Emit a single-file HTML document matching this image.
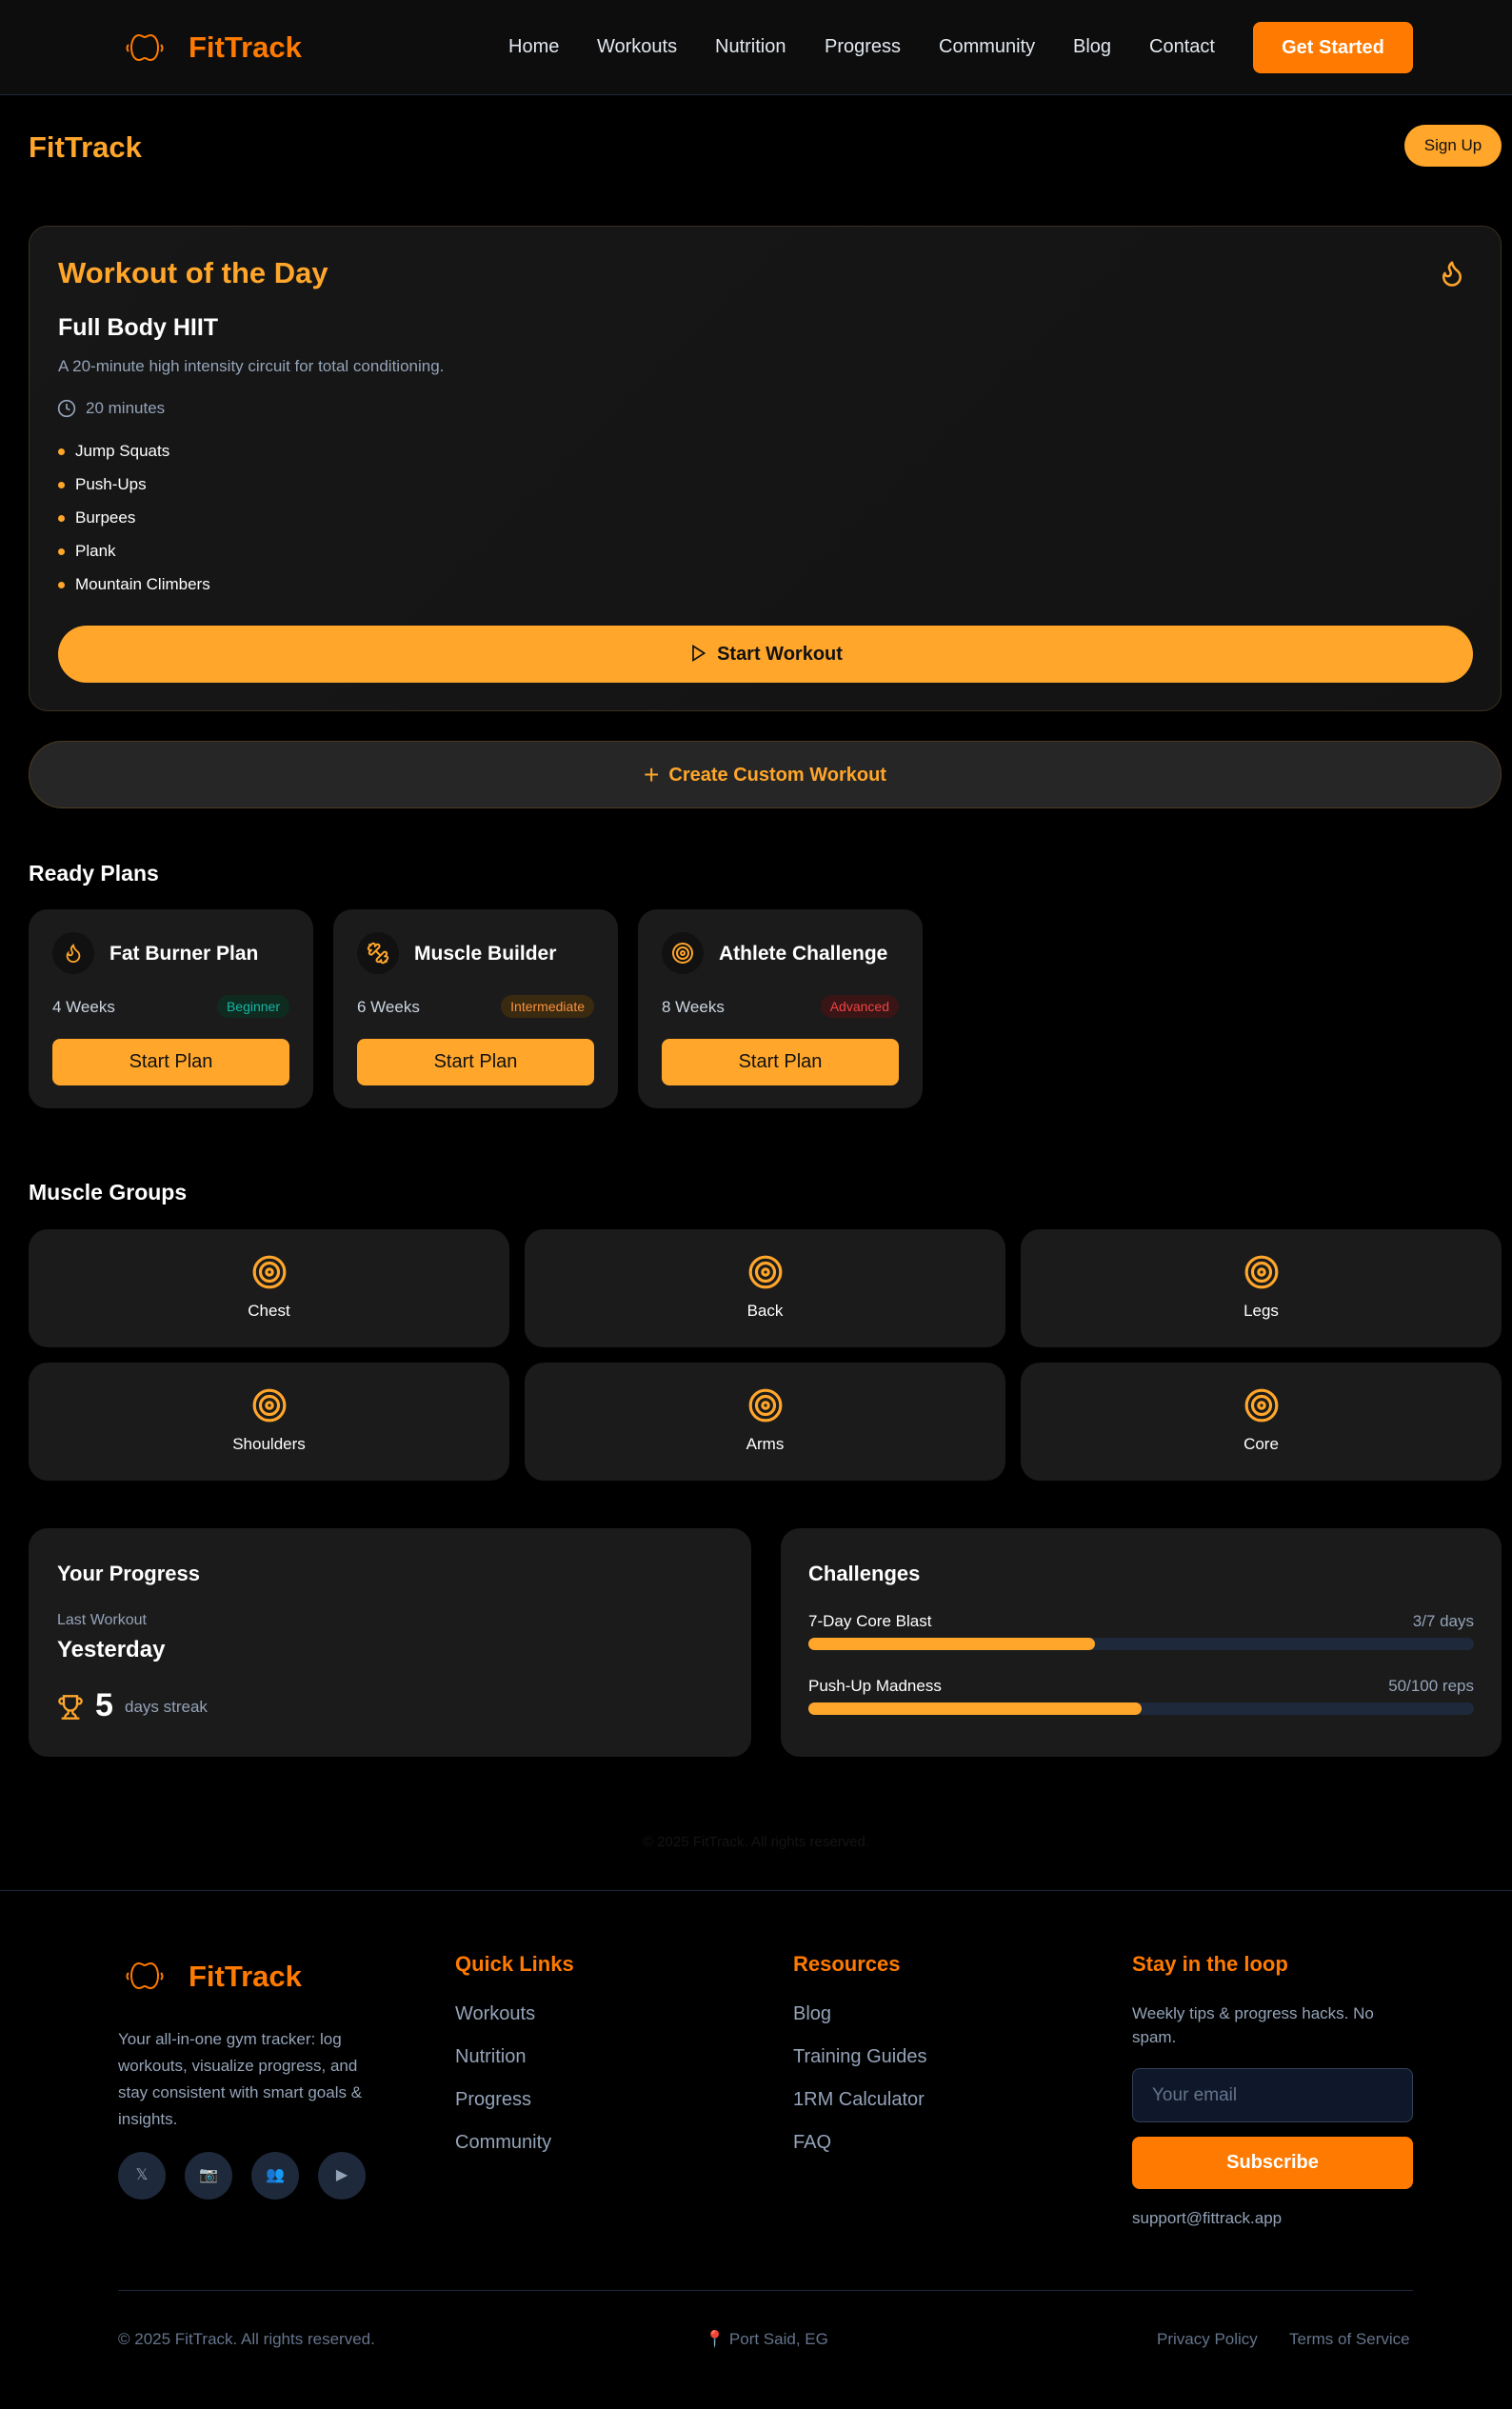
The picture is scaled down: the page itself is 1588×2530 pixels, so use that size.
<!DOCTYPE html>
<html><head><meta charset="utf-8"><style>
*{box-sizing:border-box;margin:0;padding:0}
body{width:1588px;height:2530px;background:#000;font-family:"Liberation Sans",sans-serif;color:#fff;position:relative;overflow:hidden}
.a{position:absolute}
.or{color:#ff7a00}.lo{color:#ffa62b}
nav{position:absolute;left:0;top:0;width:1588px;height:100px;background:#0d0d0d;border-bottom:1px solid #1e293b}
.nl{position:absolute;top:38px;font-size:20px;color:#e2e8f0}
.card{position:absolute;background:#1b1b1b;border-radius:20px}
.li{position:absolute;left:61px;font-size:17px;color:#fff}
.li:before{content:"";position:absolute;left:0;top:7px;width:7px;height:7px;border-radius:50%;background:#ffa62b}
.li span{margin-left:18px}
.pc{position:absolute;top:955px;width:299px;height:209px;background:#1b1b1b;border-radius:20px}
.pc .ic{position:absolute;left:25px;top:24px;width:44px;height:44px;border-radius:50%;background:#111;display:flex;align-items:center;justify-content:center}
.pc .t{position:absolute;left:85px;top:35px;font-size:21px;font-weight:bold}
.pc .w{position:absolute;left:25px;top:93px;font-size:17px;color:#cbd5e1}
.pc .b{position:absolute;right:25px;top:90px;font-size:14px;padding:4px 10px;border-radius:12px}
.pc .btn{position:absolute;left:25px;top:136px;width:249px;height:49px;background:#ffa62b;border-radius:8px;color:#111;font-size:20px;text-align:center;line-height:49px}
.mg{position:absolute;width:505px;height:124px;background:#1b1b1b;border-radius:20px;text-align:center}
.mg svg{position:absolute;left:234px;top:26px}
.mg div{position:absolute;left:0;right:0;top:76px;font-size:17px}
.fl{position:absolute;font-size:20px;color:#94a3b8}
.fh{position:absolute;top:2050px;font-size:22px;font-weight:bold;color:#ff7a00}
.soc{position:absolute;top:2260px;width:50px;height:50px;border-radius:50%;background:#1e293b;color:#94a3b8;font-size:16px;text-align:center;line-height:50px}
</style></head><body>
<nav>
<svg class="a" style="left:132px;top:33px" width="40" height="34" viewBox="0 0 40 34" fill="none" stroke="#ff7a00" stroke-width="2"><path d="M14 4c-5 0-8 6-8 13s3 13 8 13c3 0 4-2 6-2s3 2 6 2c5 0 8-6 8-13S31 4 26 4c-3 0-4 2-6 2s-3-2-6-2z"/><path d="M3 14c-2 2-2 5 0 7M37 14c2 2 2 5 0 7"/></svg>
<div class="a or" style="left:198px;top:32px;font-size:31px;font-weight:bold">FitTrack</div>
<div class="nl" style="left:534px">Home</div>
<div class="nl" style="left:627px">Workouts</div>
<div class="nl" style="left:751px">Nutrition</div>
<div class="nl" style="left:866px">Progress</div>
<div class="nl" style="left:986px">Community</div>
<div class="nl" style="left:1127px">Blog</div>
<div class="nl" style="left:1207px">Contact</div>
<div class="a" style="left:1316px;top:23px;width:168px;height:54px;background:#ff7a00;border-radius:8px;font-size:20px;font-weight:bold;text-align:center;line-height:54px">Get Started</div>
</nav>
<div class="a lo" style="left:30px;top:137px;font-size:31px;font-weight:bold">FitTrack</div>
<div class="a" style="left:1475px;top:131px;width:102px;height:44px;background:#ffa62b;border-radius:22px;color:#111;font-size:17px;text-align:center;line-height:44px">Sign Up</div>

<div class="a" style="left:30px;top:237px;width:1547px;height:510px;background:linear-gradient(135deg,#171717,#131313);border:1px solid #3a3020;border-radius:20px"></div>
<div class="a lo" style="left:61px;top:269px;font-size:31px;font-weight:bold">Workout of the Day</div>
<svg class="a" style="left:1510px;top:270px" width="30" height="34" viewBox="0 0 24 24" fill="none" stroke="#ffa62b" stroke-width="2" stroke-linecap="round" stroke-linejoin="round"><path d="M8.5 14.5A2.5 2.5 0 0 0 11 12c0-1.38-.5-2-1-3-1.07-2.14-.22-4.05 2-6 .5 2.5 2 4.9 4 6.5 2 1.6 3 3.5 3 5.5a7 7 0 1 1-14 0c0-1.15.43-2.29 1-3a2.5 2.5 0 0 0 2.5 2.5z"/></svg>
<div class="a" style="left:61px;top:330px;font-size:25px;font-weight:bold">Full Body HIIT</div>
<div class="a" style="left:61px;top:375px;font-size:17px;color:#94a3b8">A 20-minute high intensity circuit for total conditioning.</div>
<svg class="a" style="left:60px;top:419px" width="20" height="20" viewBox="0 0 24 24" fill="none" stroke="#94a3b8" stroke-width="2"><circle cx="12" cy="12" r="10"/><path d="M12 6v6l4 2"/></svg>
<div class="a" style="left:90px;top:419px;font-size:17px;color:#94a3b8">20 minutes</div>
<div class="li" style="top:464px"><span>Jump Squats</span></div>
<div class="li" style="top:499px"><span>Push-Ups</span></div>
<div class="li" style="top:534px"><span>Burpees</span></div>
<div class="li" style="top:569px"><span>Plank</span></div>
<div class="li" style="top:604px"><span>Mountain Climbers</span></div>
<div class="a" style="left:61px;top:657px;width:1486px;height:60px;background:#ffa62b;border-radius:30px;color:#111;font-size:20px;font-weight:bold;text-align:center;line-height:60px"><svg width="20" height="22" viewBox="0 0 24 24" fill="none" stroke="#111" stroke-width="2" style="vertical-align:-4px;margin-right:10px"><path d="M6 3l14 9-14 9z"/></svg>Start Workout</div>

<div class="a" style="left:30px;top:778px;width:1547px;height:71px;background:#262626;border:1px solid #4a3a20;border-radius:36px;color:#ffa62b;font-size:20px;font-weight:bold;text-align:center;line-height:69px"><span style="font-size:28px;font-weight:normal;vertical-align:-3px;margin-right:10px">+</span>Create Custom Workout</div>

<div class="a" style="left:30px;top:904px;font-size:23px;font-weight:bold">Ready Plans</div>
<div class="pc" style="left:30px"><div class="ic"><svg width="22" height="22" viewBox="0 0 24 24" fill="none" stroke="#ffa62b" stroke-width="2"><path d="M8.5 14.5A2.5 2.5 0 0 0 11 12c0-1.38-.5-2-1-3-1.07-2.14-.22-4.05 2-6 .5 2.5 2 4.9 4 6.5 2 1.6 3 3.5 3 5.5a7 7 0 1 1-14 0c0-1.15.43-2.29 1-3a2.5 2.5 0 0 0 2.5 2.5z"/></svg></div><div class="t">Fat Burner Plan</div><div class="w">4 Weeks</div><div class="b" style="background:#0f2a1e;color:#14b8a6">Beginner</div><div class="btn">Start Plan</div></div>
<div class="pc" style="left:350px"><div class="ic"><svg width="24" height="24" viewBox="0 0 24 24" fill="none" stroke="#ffa62b" stroke-width="2"><path d="M14.4 14.4 9.6 9.6M18.7 21.5a2 2 0 1 1-2.8-2.8l-1.8 1.8a2 2 0 1 1-2.8-2.8l6.3-6.3a2 2 0 1 1 2.8 2.8l-1.8 1.8a2 2 0 1 1 2.8 2.8zM21.5 21.5l-1.4-1.4M3.9 3.9 2.5 2.5M6.4 12.8a2 2 0 1 1-2.8-2.8l1.8-1.8a2 2 0 1 1-2.8-2.8l2.8-2.8a2 2 0 1 1 2.8 2.8l1.8-1.8a2 2 0 1 1 2.8 2.8z"/></svg></div><div class="t">Muscle Builder</div><div class="w">6 Weeks</div><div class="b" style="background:#3a2a10;color:#fb923c">Intermediate</div><div class="btn">Start Plan</div></div>
<div class="pc" style="left:670px"><div class="ic"><svg width="24" height="24" viewBox="0 0 24 24" fill="none" stroke="#ffa62b" stroke-width="2"><circle cx="12" cy="12" r="10"/><circle cx="12" cy="12" r="6"/><circle cx="12" cy="12" r="2"/></svg></div><div class="t">Athlete Challenge</div><div class="w">8 Weeks</div><div class="b" style="background:#3a1515;color:#ef4444">Advanced</div><div class="btn">Start Plan</div></div>

<div class="a" style="left:30px;top:1239px;font-size:23px;font-weight:bold">Muscle Groups</div>
<div class="mg" style="left:30px;top:1291px"><svg width="38" height="38" viewBox="0 0 24 24" fill="none" stroke="#ffa62b" stroke-width="2"><circle cx="12" cy="12" r="10"/><circle cx="12" cy="12" r="6"/><circle cx="12" cy="12" r="2"/></svg><div>Chest</div></div>
<div class="mg" style="left:551px;top:1291px"><svg width="38" height="38" viewBox="0 0 24 24" fill="none" stroke="#ffa62b" stroke-width="2"><circle cx="12" cy="12" r="10"/><circle cx="12" cy="12" r="6"/><circle cx="12" cy="12" r="2"/></svg><div>Back</div></div>
<div class="mg" style="left:1072px;top:1291px"><svg width="38" height="38" viewBox="0 0 24 24" fill="none" stroke="#ffa62b" stroke-width="2"><circle cx="12" cy="12" r="10"/><circle cx="12" cy="12" r="6"/><circle cx="12" cy="12" r="2"/></svg><div>Legs</div></div>
<div class="mg" style="left:30px;top:1431px"><svg width="38" height="38" viewBox="0 0 24 24" fill="none" stroke="#ffa62b" stroke-width="2"><circle cx="12" cy="12" r="10"/><circle cx="12" cy="12" r="6"/><circle cx="12" cy="12" r="2"/></svg><div>Shoulders</div></div>
<div class="mg" style="left:551px;top:1431px"><svg width="38" height="38" viewBox="0 0 24 24" fill="none" stroke="#ffa62b" stroke-width="2"><circle cx="12" cy="12" r="10"/><circle cx="12" cy="12" r="6"/><circle cx="12" cy="12" r="2"/></svg><div>Arms</div></div>
<div class="mg" style="left:1072px;top:1431px"><svg width="38" height="38" viewBox="0 0 24 24" fill="none" stroke="#ffa62b" stroke-width="2"><circle cx="12" cy="12" r="10"/><circle cx="12" cy="12" r="6"/><circle cx="12" cy="12" r="2"/></svg><div>Core</div></div>

<div class="card" style="left:30px;top:1605px;width:759px;height:240px"></div>
<div class="a" style="left:60px;top:1640px;font-size:22px;font-weight:bold">Your Progress</div>
<div class="a" style="left:60px;top:1693px;font-size:16px;color:#94a3b8">Last Workout</div>
<div class="a" style="left:60px;top:1719px;font-size:24px;font-weight:bold">Yesterday</div>
<svg class="a" style="left:60px;top:1778px" width="28" height="30" viewBox="0 0 24 24" fill="none" stroke="#ffa62b" stroke-width="2"><path d="M6 9H4.5a2.5 2.5 0 0 1 0-5H6M18 9h1.5a2.5 2.5 0 0 0 0-5H18M4 22h16M10 14.66V17c0 .55-.47.98-.97 1.21C7.85 18.75 7 20.24 7 22M14 14.66V17c0 .55.47.98.97 1.21C16.15 18.75 17 20.24 17 22M18 2H6v7a6 6 0 0 0 12 0V2z"/></svg>
<div class="a" style="left:100px;top:1772px;font-size:34px;font-weight:bold">5</div>
<div class="a" style="left:131px;top:1783px;font-size:17px;color:#94a3b8">days streak</div>

<div class="card" style="left:820px;top:1605px;width:757px;height:240px"></div>
<div class="a" style="left:849px;top:1640px;font-size:22px;font-weight:bold">Challenges</div>
<div class="a" style="left:849px;top:1693px;font-size:17px">7-Day Core Blast</div>
<div class="a" style="right:40px;top:1693px;font-size:17px;color:#94a3b8">3/7 days</div>
<div class="a" style="left:849px;top:1720px;width:699px;height:13px;background:#1e293b;border-radius:7px"><div style="width:43%;height:13px;background:#ffa62b;border-radius:7px"></div></div>
<div class="a" style="left:849px;top:1761px;font-size:17px">Push-Up Madness</div>
<div class="a" style="right:40px;top:1761px;font-size:17px;color:#94a3b8">50/100 reps</div>
<div class="a" style="left:849px;top:1788px;width:699px;height:13px;background:#1e293b;border-radius:7px"><div style="width:50%;height:13px;background:#ffa62b;border-radius:7px"></div></div>

<div class="a" style="left:0;width:1588px;top:1926px;text-align:center;font-size:15px;color:#141414">© 2025 FitTrack. All rights reserved.</div>

<div class="a" style="left:0;top:1985px;width:1588px;height:545px;background:#000;border-top:1px solid #1e293b"></div>
<svg class="a" style="left:132px;top:2058px" width="40" height="34" viewBox="0 0 40 34" fill="none" stroke="#ff7a00" stroke-width="2"><path d="M14 4c-5 0-8 6-8 13s3 13 8 13c3 0 4-2 6-2s3 2 6 2c5 0 8-6 8-13S31 4 26 4c-3 0-4 2-6 2s-3-2-6-2z"/><path d="M3 14c-2 2-2 5 0 7M37 14c2 2 2 5 0 7"/></svg>
<div class="a or" style="left:198px;top:2058px;font-size:31px;font-weight:bold">FitTrack</div>
<div class="a" style="left:124px;top:2128px;width:280px;font-size:17px;line-height:28px;color:#94a3b8">Your all-in-one gym tracker: log workouts, visualize progress, and stay consistent with smart goals &amp; insights.</div>
<div class="soc" style="left:124px">𝕏</div><div class="soc" style="left:194px">📷</div><div class="soc" style="left:264px">👥</div><div class="soc" style="left:334px">▶</div>
<div class="fh" style="left:478px">Quick Links</div>
<div class="fl" style="left:478px;top:2104px">Workouts</div><div class="fl" style="left:478px;top:2149px">Nutrition</div><div class="fl" style="left:478px;top:2194px">Progress</div><div class="fl" style="left:478px;top:2239px">Community</div>
<div class="fh" style="left:833px">Resources</div>
<div class="fl" style="left:833px;top:2104px">Blog</div><div class="fl" style="left:833px;top:2149px">Training Guides</div><div class="fl" style="left:833px;top:2194px">1RM Calculator</div><div class="fl" style="left:833px;top:2239px">FAQ</div>
<div class="fh" style="left:1189px">Stay in the loop</div>
<div class="a" style="left:1189px;top:2102px;width:290px;font-size:17px;line-height:25px;color:#94a3b8">Weekly tips &amp; progress hacks. No spam.</div>
<div class="a" style="left:1189px;top:2172px;width:295px;height:57px;background:#0f172a;border:1px solid #334155;border-radius:8px;padding-left:20px;line-height:55px;font-size:19px;color:#64748b">Your email</div>
<div class="a" style="left:1189px;top:2244px;width:295px;height:55px;background:#ff7a00;border-radius:8px;text-align:center;line-height:55px;font-size:20px;font-weight:bold">Subscribe</div>
<div class="a" style="left:1189px;top:2320px;font-size:17px;color:#94a3b8">support@fittrack.app</div>
<div class="a" style="left:124px;top:2405px;width:1360px;height:1px;background:#1e293b"></div>
<div class="a" style="left:124px;top:2447px;font-size:17px;color:#64748b">© 2025 FitTrack. All rights reserved.</div>
<div class="a" style="left:740px;top:2447px;font-size:17px;color:#64748b"><span style="color:#ef4444">📍</span> Port Said, EG</div>
<div class="a" style="left:1215px;top:2447px;font-size:17px;color:#64748b">Privacy Policy</div>
<div class="a" style="left:1354px;top:2447px;font-size:17px;color:#64748b">Terms of Service</div>
</body></html>
